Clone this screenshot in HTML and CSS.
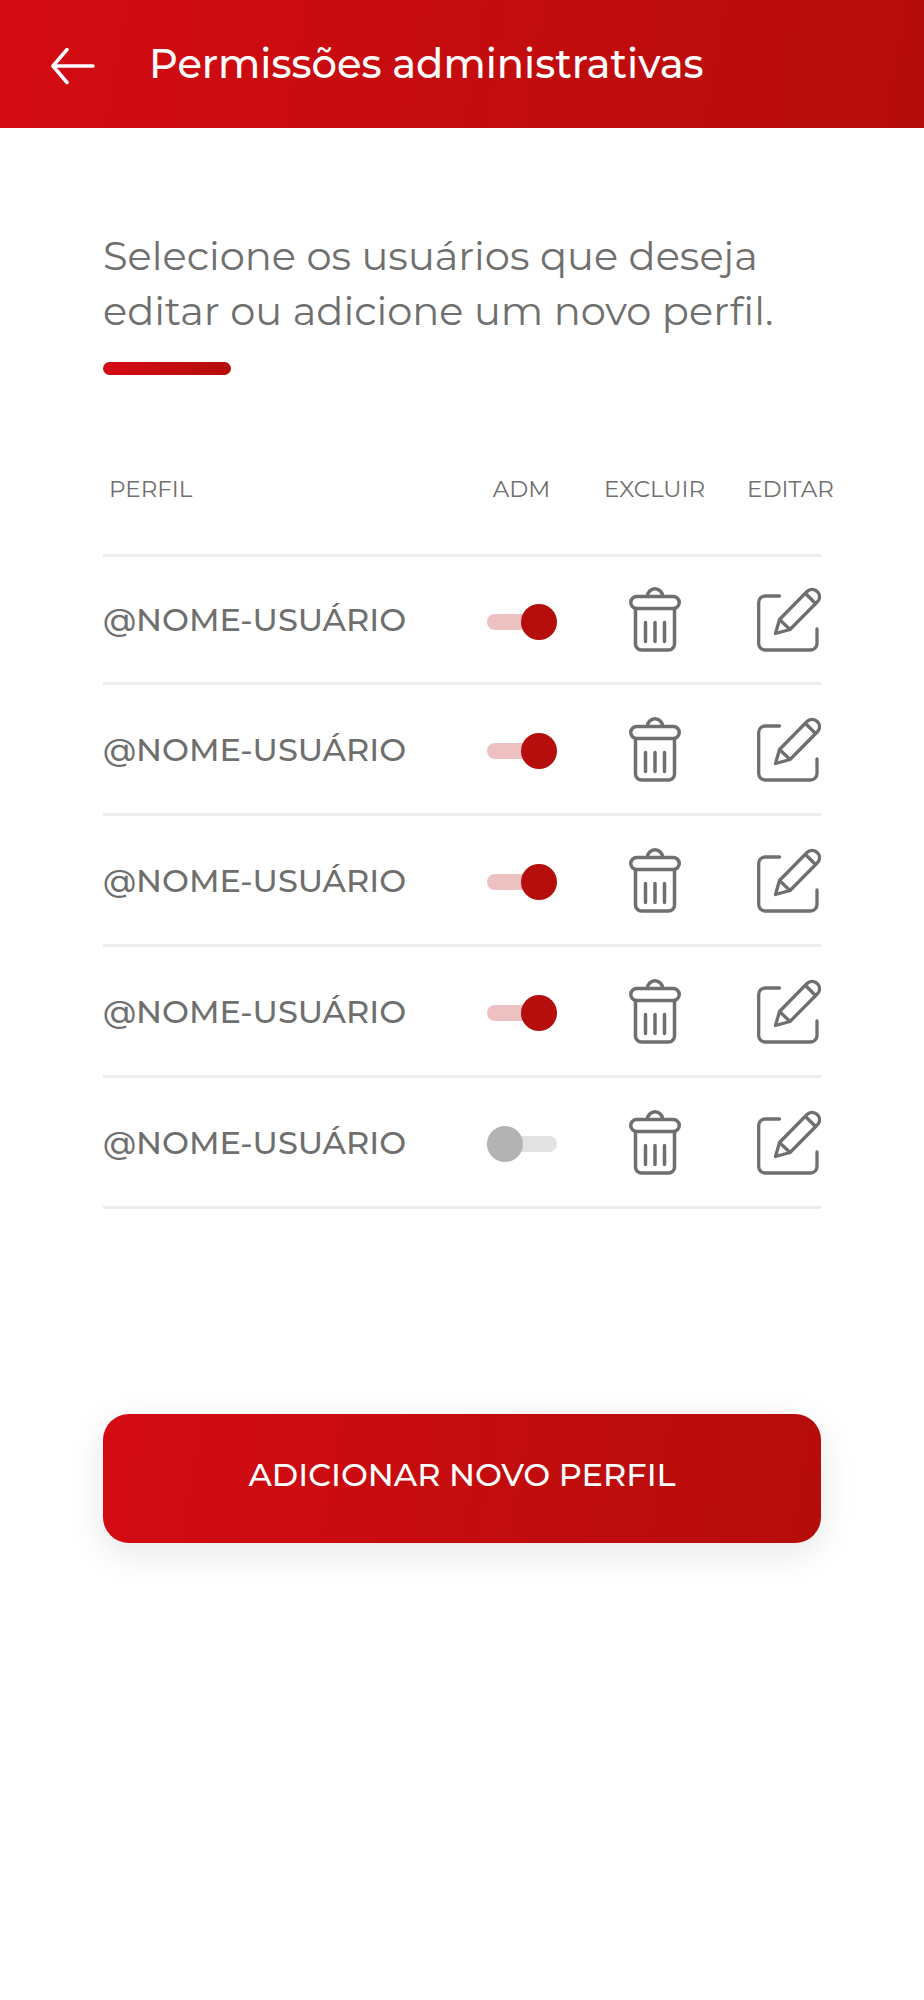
FILE: index.html
```html
<!doctype html>
<html lang="pt-BR">
  <head>
    <meta charset="utf-8">
    <meta name="viewport" content="width=device-width, initial-scale=1">
    <title>Permissões administrativas</title>
    <link rel="stylesheet" href="styles.css">
  </head>
  <body>
    <!-- icon shapes, reused on every row -->
    <svg class="sprite" aria-hidden="true">
      <symbol id="trash" viewBox="0 0 52 65" stroke-width="3.500">
        <path d="M18.500 9A7.500 7.200 0 0 1 33.500 9"/>
        <rect x="1.750" y="9.500" width="48.500" height="12" rx="6"/>
        <path d="M6.500 21.500V57a6 6 0 0 0 6 6h27a6 6 0 0 0 6-6V21.500"/>
        <path d="M16.500 35.500v19M26 35.500v19M35.500 35.500v19"/>
      </symbol>
      <symbol id="edit" viewBox="0 0 64 65" stroke-width="3.300">
        <path d="M22.500 9H8a6.500 6.500 0 0 0-6.300 6.500V56.500A6.500 6.500 0 0 0 8 63H53.500a6.500 6.500 0 0 0 6.500-6.500V42"/>
        <path d="M18.500 46.500L22.500 32.500L50 4.500A7 7 0 0 1 60.200 4.500A7 7 0 0 1 60.200 15L33 42.500ZM22.500 32.500L33 42.500M48.500 6.500L58.500 16.500"/>
      </symbol>
    </svg>

    <header class="topbar">
      <a class="back" href="#" aria-label="Voltar">
        <svg viewBox="0 0 44 38" width="44" height="38">
          <path stroke-width="3.500" d="M42 19H2M16 2.500L2 19L16 35.500"/>
        </svg>
      </a>
      <h1>Permissões administrativas</h1>
    </header>

    <main class="content">
      <p class="intro">Selecione os usuários que deseja editar ou adicione um novo perfil.</p>
      <div class="bar"></div>

      <table class="users">
        <thead>
          <tr>
            <th class="col-profile" scope="col">PERFIL</th>
            <th class="col-adm" scope="col">ADM</th>
            <th class="col-delete" scope="col">EXCLUIR</th>
            <th class="col-edit" scope="col">EDITAR</th>
          </tr>
        </thead>
        <tbody>
          <tr>
            <td><label for="adm-1">@NOME-USUÁRIO</label></td>
            <td class="center"><input class="switch" type="checkbox" id="adm-1" checked></td>
            <td class="center"><button class="icon" type="button" aria-label="Excluir"><svg width="52" height="65"><use href="#trash"/></svg></button></td>
            <td class="right"><button class="icon" type="button" aria-label="Editar"><svg width="64" height="65"><use href="#edit"/></svg></button></td>
          </tr>
          <tr>
            <td><label for="adm-2">@NOME-USUÁRIO</label></td>
            <td class="center"><input class="switch" type="checkbox" id="adm-2" checked></td>
            <td class="center"><button class="icon" type="button" aria-label="Excluir"><svg width="52" height="65"><use href="#trash"/></svg></button></td>
            <td class="right"><button class="icon" type="button" aria-label="Editar"><svg width="64" height="65"><use href="#edit"/></svg></button></td>
          </tr>
          <tr>
            <td><label for="adm-3">@NOME-USUÁRIO</label></td>
            <td class="center"><input class="switch" type="checkbox" id="adm-3" checked></td>
            <td class="center"><button class="icon" type="button" aria-label="Excluir"><svg width="52" height="65"><use href="#trash"/></svg></button></td>
            <td class="right"><button class="icon" type="button" aria-label="Editar"><svg width="64" height="65"><use href="#edit"/></svg></button></td>
          </tr>
          <tr>
            <td><label for="adm-4">@NOME-USUÁRIO</label></td>
            <td class="center"><input class="switch" type="checkbox" id="adm-4" checked></td>
            <td class="center"><button class="icon" type="button" aria-label="Excluir"><svg width="52" height="65"><use href="#trash"/></svg></button></td>
            <td class="right"><button class="icon" type="button" aria-label="Editar"><svg width="64" height="65"><use href="#edit"/></svg></button></td>
          </tr>
          <tr>
            <td><label for="adm-5">@NOME-USUÁRIO</label></td>
            <td class="center"><input class="switch" type="checkbox" id="adm-5"></td>
            <td class="center"><button class="icon" type="button" aria-label="Excluir"><svg width="52" height="65"><use href="#trash"/></svg></button></td>
            <td class="right"><button class="icon" type="button" aria-label="Editar"><svg width="64" height="65"><use href="#edit"/></svg></button></td>
          </tr>
        </tbody>
      </table>

      <button class="add" type="button">ADICIONAR NOVO PERFIL</button>
    </main>
  </body>
</html>
```
FILE: styles.css
```css
* {
  box-sizing: border-box;
}
body {
  background-color: #fff;
  color: #6f6f6e;
  font-family: Montserrat, Inter, sans-serif;
  margin: 0;
  min-height: 100vh;
}
svg {
  display: block;
  fill: none;
  stroke: currentColor;
  stroke-linecap: round;
  stroke-linejoin: round;
}
.sprite {
  height: 0;
  position: absolute;
  width: 0;
}

/* header */
.topbar {
  align-items: center;
  background: linear-gradient(100deg, #d40b13, #b50d0a);
  color: #fff;
  display: flex;
  gap: 54px;
  height: 128px;
  padding: 0 51px;
}
.back {
  color: #fff;
  padding-top: 4px;
}
h1 {
  font-size: 40px;
  font-weight: 500;
  line-height: 52px;
  margin: 0;
}

.content {
  padding: 100px 103px;
}
.intro {
  font-size: 40px;
  font-weight: 400;
  line-height: 55px;
  margin: 0;
}
.bar {
  background: linear-gradient(100deg, #d40b13, #b50d0a);
  border-radius: 7px;
  height: 13px;
  margin-top: 24px;
  width: 128px;
}

/* users */
.users {
  border-collapse: separate;
  border-spacing: 0;
  margin-top: 46px;
  table-layout: fixed;
  width: 100%;
}
th {
  border-bottom: 3px solid #ededed;
  font-size: 23px;
  font-weight: 400;
  height: 136px;
  padding: 2px 0 0;
  white-space: nowrap;
}
.col-profile {
  padding-left: 6px;
  text-align: left;
}
.col-adm,
.col-delete {
  width: 133px;
}
.col-edit {
  padding-left: 26px;
  text-align: left;
  width: 100px;
}
td {
  border-bottom: 3px solid #ededed;
  font-size: 32px;
  font-weight: 500;
  height: 131px;
  padding: 0;
}
tbody tr:first-child td {
  height: 128px;
}
.center {
  text-align: center;
}
.right {
  text-align: right;
}
.icon {
  background: none;
  border: 0;
  color: inherit;
  cursor: pointer;
  padding: 0;
  vertical-align: middle;
}

/* adm switch */
.switch {
  align-items: center;
  appearance: none;
  cursor: pointer;
  display: inline-grid;
  height: 36px;
  margin: 0;
  vertical-align: middle;
  width: 70px;
}
.switch::before,
.switch::after {
  content: "";
  grid-area: 1 / 1;
}
.switch::before {
  background-color: #e3e3e3;
  border-radius: 8px;
  height: 16px;
}
.switch::after {
  background-color: #b3b3b3;
  border-radius: 50%;
  height: 36px;
  width: 36px;
}
.switch:checked::before {
  background-color: #edc1c1;
}
.switch:checked::after {
  background-color: #b60d0d;
  justify-self: end;
}

.add {
  background: linear-gradient(100deg, #d40b13, #b50d0a);
  border: 0;
  border-radius: 26px;
  box-shadow: 0 10px 36px rgba(0, 0, 0, 0.1);
  color: #fff;
  cursor: pointer;
  display: block;
  font-family: inherit;
  font-size: 32px;
  font-weight: 500;
  height: 129px;
  margin-top: 205px;
  padding: 0 0 8px;
  width: 100%;
}
```
